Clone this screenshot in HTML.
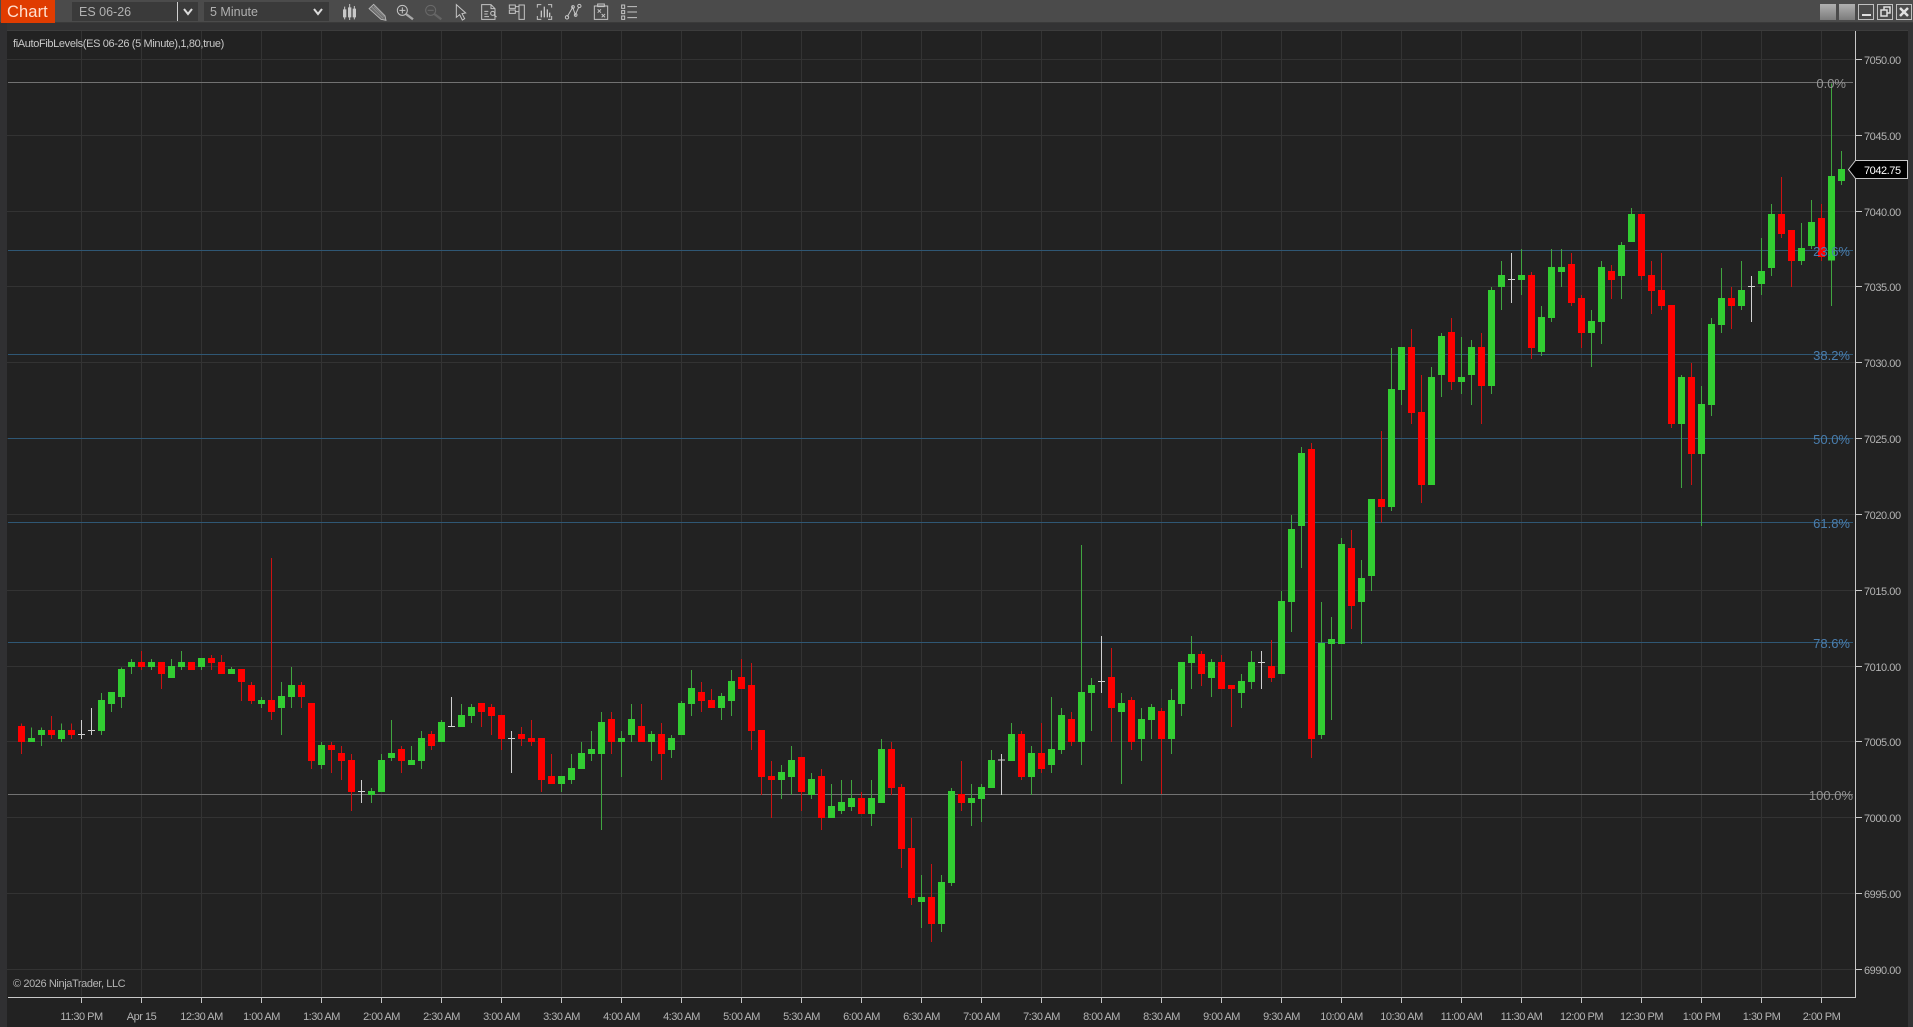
<!DOCTYPE html>
<html lang="en">
<head>
<meta charset="utf-8">
<title>Chart</title>
<style>
html,body{margin:0;padding:0;background:#222;width:1913px;height:1027px;overflow:hidden}
svg{display:block;font-family:"Liberation Sans",sans-serif}
.w{fill:none;stroke-width:3;shape-rendering:crispEdges}
.b{fill:none;stroke-width:21;shape-rendering:crispEdges}
.gw{stroke:#40a540}.rw{stroke:#cc1212}.ww{stroke:#d0d0d0}
.gb{stroke:#32cd32}.rb{stroke:#ff0000}
.px{font-size:11px;letter-spacing:-.45px;fill:#b4b4b4}
.tm{font-size:11px;letter-spacing:-.5px;fill:#b4b4b4;text-anchor:middle}
.fb{font-size:13px;fill:#4a7eae;text-anchor:end}
.fg{font-size:13px;fill:#949494;text-anchor:end}
.i{fill:none;stroke:#c4c4c4;stroke-width:3}
</style>
</head>
<body>
<svg width="1913" height="1027" viewBox="0 0 1913 1027" xmlns="http://www.w3.org/2000/svg">
<rect width="1913" height="1027" fill="#222"/>
<!-- frame -->
<rect x="0" y="23" width="1913" height="8" fill="#333334"/>
<rect x="0" y="30" width="1909" height="1" fill="#3c3c3c"/>
<rect x="0" y="23" width="7" height="1004" fill="#303032"/>
<rect x="1908" y="23" width="5" height="1004" fill="#333334"/>
<!-- toolbar -->
<rect x="0" y="0" width="1913" height="23" fill="#4b4b4b"/>
<rect x="0" y="22" width="1913" height="1" fill="#3a3a3a"/>
<rect x="1" y="0" width="54" height="23" fill="#e03c00"/>
<text x="7" y="17" font-size="16.5" letter-spacing=".1" fill="#ffe0d0">Chart</text>
<rect x="72" y="2" width="105" height="19" fill="#3a3a3a"/>
<rect x="177" y="2" width="1" height="19" fill="#cfcfcf"/>
<rect x="178" y="2" width="20" height="19" fill="#3a3a3a"/>
<text x="79" y="16" font-size="12.5" fill="#b0b0b0">ES 06-26</text>
<path d="M184 9L188 14L192 9" fill="none" stroke="#dcdcdc" stroke-width="2"/>
<rect x="204" y="2" width="125" height="19" fill="#3a3a3a"/>
<text x="210" y="16" font-size="12.5" fill="#b0b0b0">5 Minute</text>
<path d="M314 9L318 14L322 9" fill="none" stroke="#dcdcdc" stroke-width="2"/>
<!-- icons -->
<svg x="335" y="0" width="320" height="26" viewBox="0 0 960 78">
<path d="M29 20V58M44 12V60M58 18V58" stroke="#c8c8c8" stroke-width="3" fill="none"/>
<path d="M24 28H34V52H24ZM39 22H49V52H39ZM53 26H63V52H53Z" fill="#c8c8c8"/>
<path d="M102 26L116 13L150 47L153 61L138 58Z" fill="#6e6e6e" stroke="#bcbcbc" stroke-width="2.500"/>
<path d="M109 20L144 55M117 20L148 50" stroke="#b8b8b8" stroke-width="1.500" fill="none"/>
<circle cx="202" cy="31" r="15" class="i"/>
<path d="M193 31H211M202 22V40" class="i"/>
<path d="M213 42L234 58" stroke="#a8a8a8" stroke-width="7" fill="none"/>
<circle cx="287" cy="31" r="15" fill="none" stroke="#6a6a6a" stroke-width="3"/>
<path d="M278 31H296" stroke="#6a6a6a" stroke-width="3" fill="none"/>
<path d="M298 42L319 58" stroke="#646464" stroke-width="7" fill="none"/>
<path d="M364 14V52L374 44L382 60L389 56L381 41L392 39Z" class="i"/>
<path d="M440 14H468L480 26V58H440ZM468 14V26H480M448 34H460M448 42H458M448 50H462" class="i"/>
<circle cx="473" cy="40" r="6" fill="#4b4b4b" stroke="#c4c4c4" stroke-width="3"/>
<path d="M477 45L485 51" class="i"/>
<path d="M523 15H541V25H523ZM523 30H541V40H523ZM541 20H552M541 35H552M552 15H568V58H552Z" class="i"/>
<path d="M607 23V14H619M639 14H650V23M607 48V58H619M639 58H650V48" class="i"/>
<path d="M619 52V32M628 52V20M637 52V28M644 52V38" stroke="#c4c4c4" stroke-width="4" fill="none"/>
<path d="M697 50L713 22L721 44L732 20" class="i"/>
<circle cx="696" cy="52" r="5" class="i"/><circle cx="714" cy="21" r="4" class="i"/><circle cx="722" cy="45" r="4" class="i"/><circle cx="733" cy="18" r="5" class="i"/>
<path d="M778 18H818V58H778ZM788 12H808V20H788ZM788 28L798 38M798 28L788 38M800 42L810 52M810 42L800 52" class="i"/>
<path d="M860 15H869V25H860ZM860 32H869V41H860ZM860 48H869V58H860ZM877 20H906M877 36H906M877 53H906" class="i"/>
</svg>
<!-- window buttons -->
<defs><linearGradient id="gb" x1="0" y1="0" x2="0" y2="1"><stop offset="0" stop-color="#b0b0b0"/><stop offset="1" stop-color="#7c7c7c"/></linearGradient></defs>
<rect x="1820" y="4" width="16" height="16" fill="url(#gb)"/>
<rect x="1839" y="4" width="16" height="16" fill="url(#gb)"/>
<rect x="1858.5" y="4.500" width="15" height="15" fill="none" stroke="#c0c0c0"/>
<rect x="1862" y="14" width="9" height="2" fill="#e0e0e0"/>
<rect x="1877.500" y="4.500" width="15" height="15" fill="none" stroke="#c0c0c0"/>
<path d="M1884 10V7H1890V13H1887M1881 10H1887V16H1881Z" fill="none" stroke="#e0e0e0" stroke-width="1.500"/>
<rect x="1896.500" y="4.500" width="15" height="15" fill="none" stroke="#c0c0c0"/>
<path d="M1900 8L1908 16M1908 8L1900 16" stroke="#e0e0e0" stroke-width="2.500" fill="none"/>
<!-- horizontal grid -->
<path shape-rendering="crispEdges" stroke="#333" fill="none" d="M7 59.500H1855M7 135.500H1855M7 211.500H1855M7 286.500H1855M7 362.500H1855M7 438.500H1855M7 514.500H1855M7 590.500H1855M7 666.500H1855M7 741.500H1855M7 817.500H1855M7 893.500H1855M7 969.500H1855"/>
<!-- vertical grid -->
<path shape-rendering="crispEdges" stroke="#333" fill="none" d="M81.500 31V996M141.500 31V996M201.500 31V996M261.500 31V996M321.500 31V996M381.500 31V996M441.500 31V996M501.500 31V996M561.500 31V996M621.500 31V996M681.500 31V996M741.500 31V996M801.500 31V996M861.500 31V996M921.500 31V996M981.500 31V996M1041.500 31V996M1101.500 31V996M1161.500 31V996M1221.500 31V996M1281.500 31V996M1341.500 31V996M1401.500 31V996M1461.500 31V996M1521.500 31V996M1581.500 31V996M1641.500 31V996M1701.500 31V996M1761.500 31V996M1821.500 31V996"/>
<!-- fib lines -->
<path shape-rendering="crispEdges" stroke="#727272" fill="none" d="M8 82.500H1853M8 794.500H1853"/>
<path shape-rendering="crispEdges" stroke="#2f5774" fill="none" d="M8 250.500H1853M8 354.500H1853M8 438.500H1853M8 522.500H1853M8 642.500H1853"/>
<!-- candles group A -->
<g transform="translate(0,640) scale(.33333)">
<path class="w gw" d="M94.500 262V306M124.500 262V318M184.500 250V306M304.500 159V285M334.500 156V216M364.500 82V204M394.500 57V102M454.500 57V90M514.500 57V114M544.500 33V90M604.500 54V90M694.500 81V102M784.500 171V204M844.500 126V285M874.500 81V204M964.500 306V387M1114.500 444V489M1144.500 342V456M1174.500 240V363M1234.500 318V375M1264.500 273V387M1324.500 240V306M1384.500 192V261M1414.500 192V249"/>
<path class="w rw" d="M64.500 250V342M154.500 228V297M214.500 250V297M424.500 33V90M484.500 66V147M634.500 45V90M664.500 45V102M724.500 87V183M754.500 126V192M814.500 -246V240M904.500 126V204M934.500 189V387M994.500 306V399M1024.500 318V420M1054.500 342V513M1204.500 318V399M1294.500 273V330M1444.500 189V261M1474.500 192V285"/>
<path class="w ww" d="M244.500 240V297M234 283H255M274.500 204V285M264 271H285M1084.500 420V489M1074 454H1095M1354.500 171V261M1344 259H1365"/>
<path class="b gb" d="M94.500 294V306M124.500 270V285M184.500 270V297M304.500 180V273M334.500 156V192M364.500 87V171M394.500 66V81M454.500 66V81M514.500 78V114M544.500 66V81M604.500 54V81M694.500 87V102M784.500 180V192M844.500 168V204M874.500 135V171M964.500 315V375M1114.500 453V465M1144.500 360V456M1174.500 339V354M1234.500 360V375M1264.500 294V363M1324.500 246V306M1384.500 225V261M1414.500 201V228"/>
<path class="b rb" d="M64.500 258V306M154.500 270V285M214.500 270V285M424.500 66V81M484.500 66V102M574.500 66V90M634.500 54V69M664.500 66V102M724.500 87V126M754.500 135V183M814.500 180V216M904.500 135V171M934.500 189V363M994.500 315V330M1024.500 339V363M1054.500 360V456M1204.500 327V363M1294.500 282V318M1444.500 189V216M1474.500 201V228"/>
</g>
<!-- candles group B -->
<g transform="translate(500,640) scale(.33333)">
<path class="w gw" d="M184.500 408V456M214.500 342V432M244.500 306V387M274.500 273V363M304.500 216V570M364.500 273V411M394.500 192V306M454.500 273V363M514.500 285V354M544.500 183V285M574.500 90V228M664.500 159V240M694.500 90V228M844.500 375V477M874.500 318V465M934.500 399V477M994.500 432V534M1024.500 420V522M1054.500 420V513M1114.500 420V558M1144.500 297V489M1264.500 705V864M1324.500 705V876M1354.500 444V738M1414.500 432V558M1444.500 432V546M1474.500 330V444"/>
<path class="w rw" d="M4.500 225V330M64.500 261V318M94.500 240V318M124.500 294V456M154.500 342V432M334.500 216V342M424.500 192V306M484.500 249V420M604.500 126V216M634.500 147V204M724.500 57V147M754.500 69V330M784.500 270V465M814.500 363V534M904.500 351V513M964.500 387V570M1084.500 456V522M1174.500 306V465M1204.500 432V684M1234.500 534V795M1294.500 672V906M1384.500 363V513"/>
<path class="w ww" d="M34.500 273V399M24 295H45"/>
<path class="b gb" d="M184.500 408V432M214.500 384V420M244.500 339V387M274.500 327V342M304.500 246V342M364.500 294V306M394.500 237V285M454.500 282V306M514.500 294V330M544.500 189V285M574.500 144V192M664.500 168V204M694.500 123V183M844.500 396V420M874.500 360V411M934.500 417V465M994.500 498V534M1024.500 486V513M1054.500 474V501M1114.500 474V522M1144.500 327V489M1264.500 771V786M1324.500 726V852M1354.500 453V729M1414.500 474V489M1444.500 441V477M1474.500 360V444"/>
<path class="b rb" d="M4.500 225V297M64.500 282V297M94.500 294V306M124.500 294V420M154.500 408V432M334.500 237V306M424.500 258V306M484.500 282V342M604.500 156V183M634.500 180V204M724.500 111V147M754.500 135V273M784.500 270V411M814.500 408V420M904.500 351V456M964.500 408V534M1084.500 474V522M1174.500 327V444M1204.500 441V627M1234.500 624V774M1294.500 771V852M1384.500 462V489"/>
</g>
<!-- candles group C -->
<g transform="translate(1000,430) scale(.33333)">
<path class="w gw" d="M34.500 879V993M94.500 948V1095M154.500 801V1029M184.500 834V972M244.500 345V1005M274.500 744V903M364.500 789V1062M424.500 834V993M454.500 822V927M514.500 777V972M544.500 696V858M574.500 618V777M634.500 687V801M724.500 732V834M754.500 663V777M844.500 483V732M874.500 255V606M904.500 51V414M964.500 516V927M994.500 561V870M1024.500 324V642M1084.500 390V642M1114.500 207V483"/>
<path class="w rw" d="M64.500 903V1050M124.500 879V1029M214.500 846V948M334.500 654V936M394.500 801V960M484.500 834V1092M604.500 663V768M664.500 675V777M694.500 765V891M814.500 630V756M934.500 39V984M1054.500 300V597M1144.500 3V277"/>
<path class="w ww" d="M4.500 972V1095M-6 990H15M304.500 618V789M294 754H315M784.500 663V777M774 697H795"/>
<path class="b gb" d="M34.500 912V993M94.500 969V1041M154.500 957V1005M184.500 855V960M244.500 786V936M274.500 765V789M364.500 819V846M424.500 867V927M454.500 831V870M514.500 810V927M544.500 696V822M574.500 672V699M634.500 696V744M724.500 753V789M754.500 696V756M844.500 513V732M874.500 297V516M904.500 69V288M964.500 639V915M994.500 627V642M1024.500 342V642M1084.500 444V516M1114.500 207V438"/>
<path class="b rb" d="M64.500 912V1041M124.500 969V1017M214.500 867V936M334.500 741V834M394.500 810V936M484.500 843V927M604.500 672V732M664.500 696V777M694.500 765V777M814.500 708V744M934.500 57V927M1054.500 354V528M1144.500 207V231"/>
</g>
<!-- candles group D -->
<g transform="translate(1380,160) scale(.33333)">
<path class="w gw" d="M34.500 564V1053M64.500 561V735M154.500 621V975M184.500 519V711M244.500 531V702M274.500 540V735M334.500 381V702M364.500 303V450M424.500 267V405M484.500 438V588M514.500 267V486M544.500 267V381M634.500 450V621M664.500 303V552M724.500 246V417M754.500 144V246"/>
<path class="w rw" d="M94.500 507V792M124.500 645V1029M214.500 474V690M304.500 519V792M454.500 336V597M574.500 279V438M604.500 405V564M694.500 315V417M784.500 162V360M814.500 303V462M844.500 279V450"/>
<path class="w ww" d="M394.500 279V429M384 358H405"/>
<path class="b gb" d="M34.500 687V1041M64.500 561V690M154.500 651V975M184.500 528V645M244.500 651V666M274.500 561V645M334.500 390V678M364.500 345V381M424.500 345V360M484.500 471V576M514.500 321V474M544.500 321V336M634.500 483V519M664.500 321V486M724.500 255V348M754.500 162V246"/>
<path class="b rb" d="M94.500 561V759M124.500 756V975M214.500 516V666M304.500 561V678M454.500 345V564M574.500 312V429M604.500 414V519M694.500 333V360M784.500 162V348M814.500 345V393M844.500 390V438"/>
</g>
<!-- candles group E -->
<g transform="translate(1600,160) scale(.33333)">
<path class="w gw" d="M244.500 645V984M304.500 678V1098M334.500 474V768M364.500 324V519M424.500 303V450M484.500 234V405M514.500 132V348M604.500 189V315M634.500 120V267M694.500 -230V438M724.500 -27V75"/>
<path class="w rw" d="M214.500 435V804M274.500 609V975M394.500 381V507M544.500 51V234M574.500 210V381M664.500 132V303"/>
<path class="w ww" d="M454.500 348V486M444 379H465"/>
<path class="b gb" d="M244.500 651V792M304.500 732V882M334.500 492V735M364.500 414V495M424.500 390V438M484.500 333V372M514.500 162V324M604.500 264V303M634.500 186V258M694.500 48V302M724.500 27V63"/>
<path class="b rb" d="M214.500 435V792M274.500 651V882M394.500 414V438M544.500 162V222M574.500 210V303M664.500 174V291"/>
</g>
<!-- fib labels -->
<text class="fg" x="1846" y="88">0.0%</text>
<text class="fb" x="1850" y="256">23.6%</text>
<text class="fb" x="1850" y="360">38.2%</text>
<text class="fb" x="1850" y="444">50.0%</text>
<text class="fb" x="1850" y="528">61.8%</text>
<text class="fb" x="1850" y="648">78.6%</text>
<text class="fg" x="1853" y="800">100.0%</text>
<!-- header / copyright -->
<text x="13" y="47" font-size="11" letter-spacing="-.36" fill="#c8c8c8">fiAutoFibLevels(ES 06-26 (5 Minute),1,80,true)</text>
<text x="13" y="987" font-size="11" letter-spacing="-.4" fill="#b4b4b4">© 2026 NinjaTrader, LLC</text>
<!-- axes -->
<path shape-rendering="crispEdges" stroke="#c8c8c8" fill="none" d="M8 997.500H1856M1855.500 31V998"/>
<path shape-rendering="crispEdges" stroke="#c8c8c8" fill="none" d="M1856 59.500H1862M1856 135.500H1862M1856 211.500H1862M1856 286.500H1862M1856 362.500H1862M1856 438.500H1862M1856 514.500H1862M1856 590.500H1862M1856 666.500H1862M1856 741.500H1862M1856 817.500H1862M1856 893.500H1862M1856 969.500H1862"/>
<path shape-rendering="crispEdges" stroke="#c8c8c8" fill="none" d="M81.500 998V1003M141.500 998V1003M201.500 998V1003M261.500 998V1003M321.500 998V1003M381.500 998V1003M441.500 998V1003M501.500 998V1003M561.500 998V1003M621.500 998V1003M681.500 998V1003M741.500 998V1003M801.500 998V1003M861.500 998V1003M921.500 998V1003M981.500 998V1003M1041.500 998V1003M1101.500 998V1003M1161.500 998V1003M1221.500 998V1003M1281.500 998V1003M1341.500 998V1003M1401.500 998V1003M1461.500 998V1003M1521.500 998V1003M1581.500 998V1003M1641.500 998V1003M1701.500 998V1003M1761.500 998V1003M1821.500 998V1003"/>
<!-- price labels -->
<text class="px" x="1864" y="64">7050.00</text>
<text class="px" x="1864" y="140">7045.00</text>
<text class="px" x="1864" y="216">7040.00</text>
<text class="px" x="1864" y="291">7035.00</text>
<text class="px" x="1864" y="367">7030.00</text>
<text class="px" x="1864" y="443">7025.00</text>
<text class="px" x="1864" y="519">7020.00</text>
<text class="px" x="1864" y="595">7015.00</text>
<text class="px" x="1864" y="671">7010.00</text>
<text class="px" x="1864" y="746">7005.00</text>
<text class="px" x="1864" y="822">7000.00</text>
<text class="px" x="1864" y="898">6995.00</text>
<text class="px" x="1864" y="974">6990.00</text>
<!-- price marker -->
<path d="M1848.500 169.500L1855.500 160.500H1907.500V178.500H1855.500Z" fill="#000" stroke="#c8c8c8"/>
<text x="1864" y="174" font-size="11" letter-spacing="-.45" fill="#fff">7042.75</text>
<!-- time labels -->
<text class="tm" x="81.500" y="1020">11:30 PM</text>
<text class="tm" x="141.500" y="1020">Apr 15</text>
<text class="tm" x="201.500" y="1020">12:30 AM</text>
<text class="tm" x="261.500" y="1020">1:00 AM</text>
<text class="tm" x="321.500" y="1020">1:30 AM</text>
<text class="tm" x="381.500" y="1020">2:00 AM</text>
<text class="tm" x="441.500" y="1020">2:30 AM</text>
<text class="tm" x="501.500" y="1020">3:00 AM</text>
<text class="tm" x="561.500" y="1020">3:30 AM</text>
<text class="tm" x="621.500" y="1020">4:00 AM</text>
<text class="tm" x="681.500" y="1020">4:30 AM</text>
<text class="tm" x="741.500" y="1020">5:00 AM</text>
<text class="tm" x="801.500" y="1020">5:30 AM</text>
<text class="tm" x="861.500" y="1020">6:00 AM</text>
<text class="tm" x="921.500" y="1020">6:30 AM</text>
<text class="tm" x="981.500" y="1020">7:00 AM</text>
<text class="tm" x="1041.500" y="1020">7:30 AM</text>
<text class="tm" x="1101.500" y="1020">8:00 AM</text>
<text class="tm" x="1161.500" y="1020">8:30 AM</text>
<text class="tm" x="1221.500" y="1020">9:00 AM</text>
<text class="tm" x="1281.500" y="1020">9:30 AM</text>
<text class="tm" x="1341.500" y="1020">10:00 AM</text>
<text class="tm" x="1401.500" y="1020">10:30 AM</text>
<text class="tm" x="1461.500" y="1020">11:00 AM</text>
<text class="tm" x="1521.500" y="1020">11:30 AM</text>
<text class="tm" x="1581.500" y="1020">12:00 PM</text>
<text class="tm" x="1641.500" y="1020">12:30 PM</text>
<text class="tm" x="1701.500" y="1020">1:00 PM</text>
<text class="tm" x="1761.500" y="1020">1:30 PM</text>
<text class="tm" x="1821.500" y="1020">2:00 PM</text>
</svg>
</body>
</html>
